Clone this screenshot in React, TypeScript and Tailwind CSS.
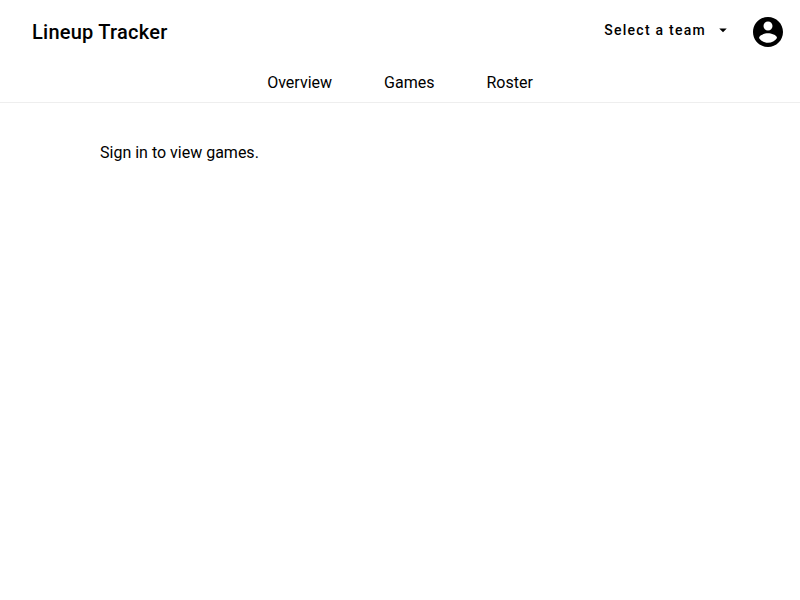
const tabs = ["Overview", "Games", "Roster"];

export default function App() {
  return (
    <div className="min-h-[600px] bg-white font-[Roboto,sans-serif] text-black antialiased">
      <header className="border-b border-[#eeeeee]">
        <div className="flex h-16 items-center pr-[17px] pl-8">
          <h1 className="text-xl font-medium tracking-[0.25px]">Lineup Tracker</h1>
          <button className="mb-1 ml-auto flex items-center text-sm font-medium tracking-[1.25px]">
            Select a team
            <svg viewBox="0 0 24 24" className="ml-2 h-[18px] w-[18px]" fill="currentColor">
              <path d="M7 10l5 5 5-5z" />
            </svg>
          </button>
          <svg viewBox="2 2 20 20" className="ml-[21px] h-[30px] w-[30px]" fill="currentColor">
            <path d="M12 2C6.48 2 2 6.48 2 12s4.480 10 10 10 10-4.480 10-10S17.520 2 12 2zm0 3c1.660 0 3 1.340 3 3s-1.340 3-3 3-3-1.340-3-3 1.340-3 3-3zm0 14.200c-2.500 0-4.710-1.280-6-3.220.03-1.990 4-3.080 6-3.080 1.990 0 5.970 1.090 6 3.080-1.290 1.940-3.500 3.220-6 3.220z" />
          </svg>
        </div>
        <nav className="flex h-[38px] justify-center gap-[52px] pt-[7px] text-base leading-6">
          {tabs.map((tab) => (
            <a key={tab}>{tab}</a>
          ))}
        </nav>
      </header>
      <main className="px-[100px] pt-[38px] text-base leading-6">Sign in to view games.</main>
    </div>
  );
}
